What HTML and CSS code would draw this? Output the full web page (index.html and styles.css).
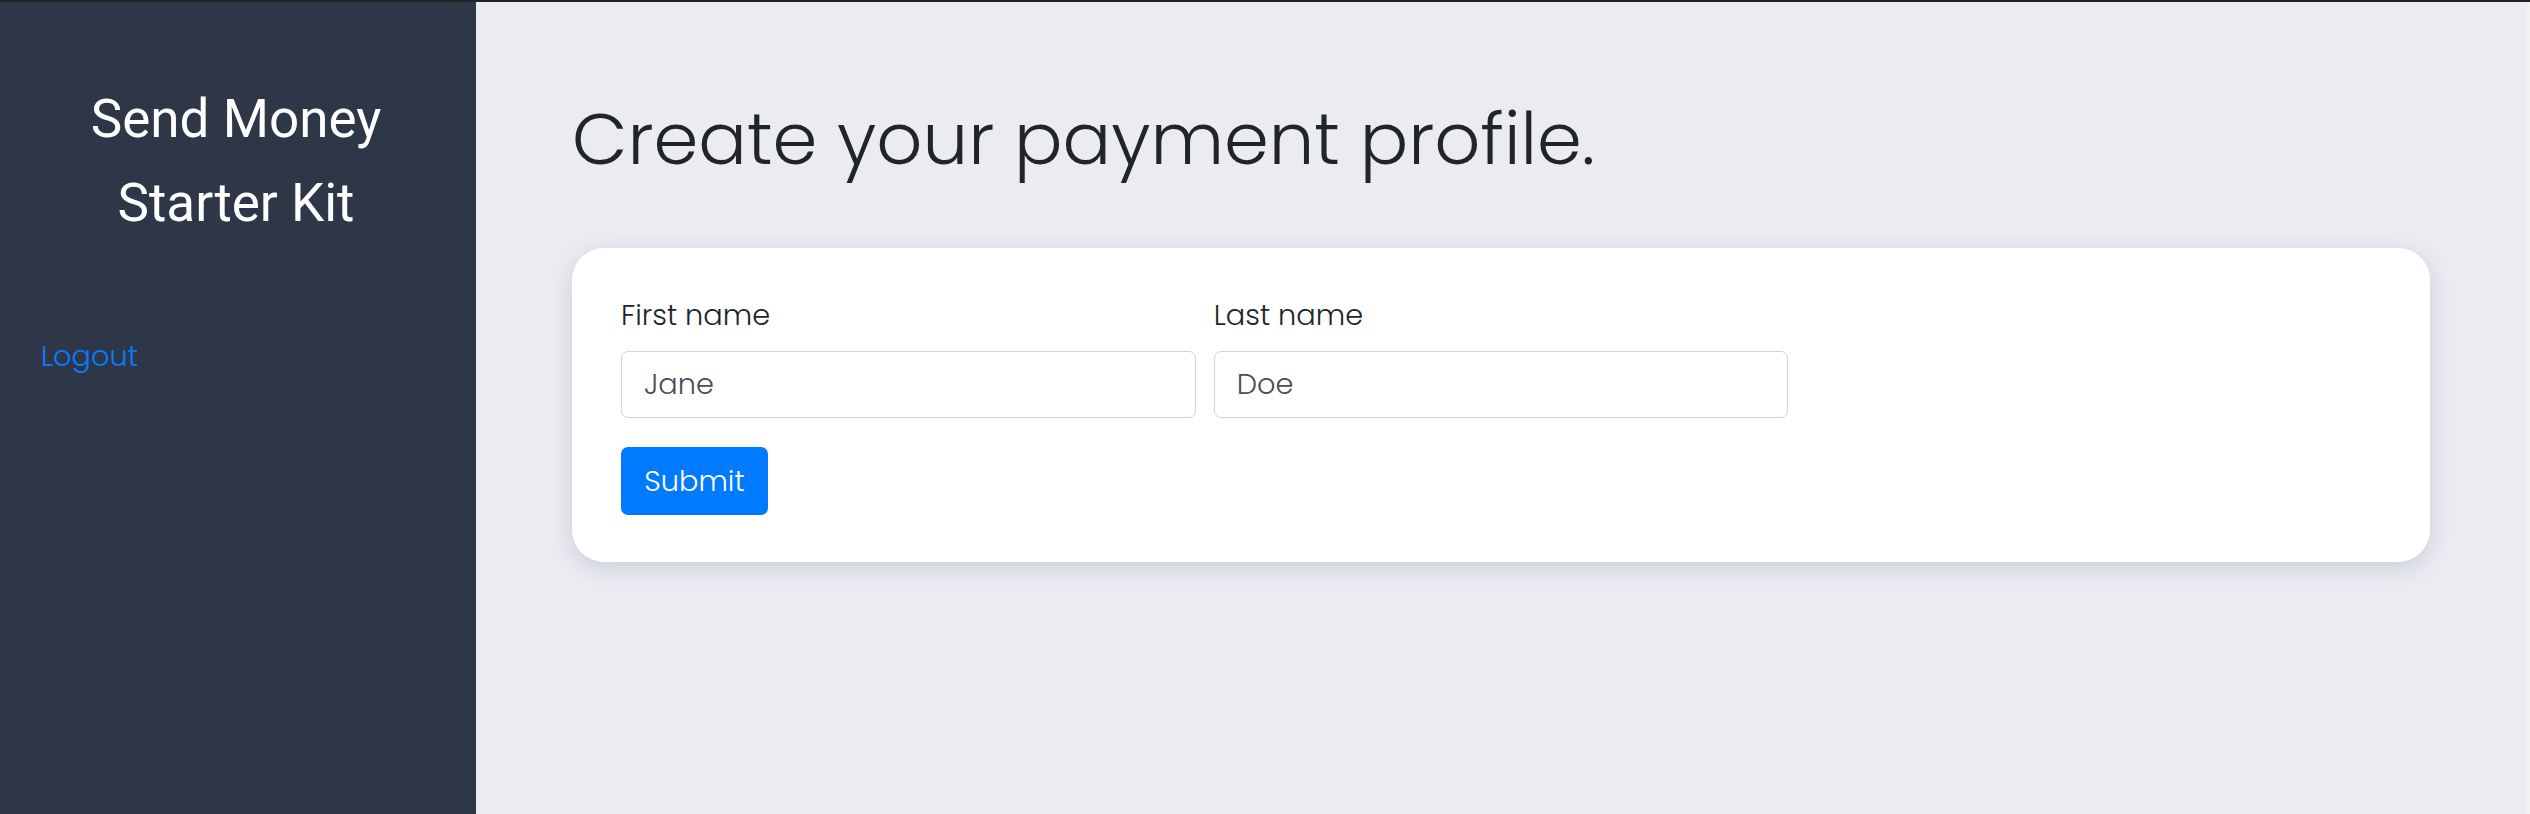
FILE: index.html
```html
<!DOCTYPE html>
<html lang="en">
<head>
<meta charset="utf-8">
<title>Send Money Starter Kit</title>
<link rel="stylesheet" href="styles.css">
</head>
<body>
<div class="app">
  <aside class="sidebar">
    <div class="brand">Send Money<br>Starter Kit</div>
    <a class="logout" href="#">Logout</a>
  </aside>
  <main class="main">
    <h1 class="page-title">Create your payment profile.</h1>
    <section class="card">
      <form class="form">
        <div class="form-grid">
          <div class="field">
            <label class="label" for="first">First name</label>
            <input class="input" id="first" type="text" value="Jane">
          </div>
          <div class="field">
            <label class="label" for="last">Last name</label>
            <input class="input" id="last" type="text" value="Doe">
          </div>
        </div>
        <button class="btn" type="button">Submit</button>
      </form>
    </section>
  </main>
</div>
</body>
</html>
```
FILE: styles.css
```css
* { box-sizing: border-box; }
html, body { margin: 0; padding: 0; height: 100%; overflow: hidden; }
body {
  font-family: "Poppins", "Inter", "Noto Sans", sans-serif;
  font-size: 28.8px;
  color: #212529;
  background: #ebecf1;
}
.app {
  display: flex;
  height: 100vh;
  border-top: 2px solid #232323;
}
.sidebar {
  width: 476px;
  flex: 0 0 476px;
  background: #2e3748;
  padding-top: 75px;
  display: flex;
  flex-direction: column;
}
.brand {
  color: #ffffff;
  font-family: "Roboto", sans-serif;
  font-weight: 400;
  font-size: 53px;
  line-height: 84px;
  text-align: center;
  padding-right: 4px;
}
.logout {
  margin-top: 90px;
  padding-left: 41px;
  color: #0a7bff;
  text-decoration: none;
  font-weight: 300;
  font-size: 28.8px;
  line-height: 43px;
}
.main {
  flex: 1;
  padding: 94px 97px 40px 96px;
  background: #ebecf1;
  border-right: 3px solid #f2f2f4;
}
.page-title {
  margin: 0 0 66px;
  font-weight: 300;
  font-size: 72px;
  line-height: 86px;
  color: #212529;
}
.card {
  background: #ffffff;
  border-radius: 32px;
  box-shadow: 0 6px 22px rgba(40, 50, 90, 0.16);
  padding: 46px 49px 47px 49px;
}
.form-grid {
  display: grid;
  grid-template-columns: repeat(3, 1fr);
  column-gap: 18px;
  margin-bottom: 29px;
}
.field { display: flex; flex-direction: column; }
.label {
  font-weight: 300;
  font-size: 28.8px;
  line-height: 43px;
  margin-bottom: 14px;
  color: #212529;
}
.input {
  height: 67px;
  width: 100%;
  padding: 0 22px;
  border: 1px solid #ced4da;
  border-radius: 7px;
  font-family: inherit;
  font-weight: 300;
  font-size: 28.8px;
  color: #495057;
  background: #fff;
  outline: none;
}
.btn {
  display: block;
  height: 68px;
  width: 147px;
  padding: 0;
  border: 0;
  border-radius: 7px;
  background: #007bff;
  color: #fff;
  font-family: inherit;
  font-weight: 300;
  font-size: 28.8px;
  cursor: pointer;
}
```
